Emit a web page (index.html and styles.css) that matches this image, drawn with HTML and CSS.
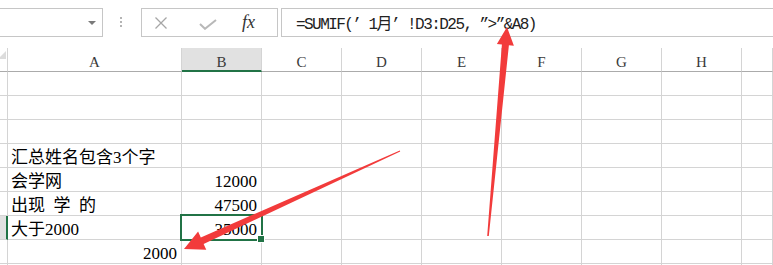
FILE: index.html
```html
<!DOCTYPE html>
<html>
<head>
    <meta charset="UTF-8">
    <title>SUMIF</title>
    <link rel="stylesheet" href="styles.css">
</head>
<body>
    <div class="fbar">
        <div class="namebox"><span class="drop"></span></div>
        <div class="grip"><i></i><i></i><i></i></div>
        <div class="fxbox">
            <svg class="ic-x" width="14" height="12" viewBox="0 0 14 12"><path d="M1.5 0.5 L12.5 11.5 M12.5 0.5 L1.5 11.5" /></svg>
            <svg class="ic-ok" width="18" height="11" viewBox="0 0 18 11"><path d="M1 5 L6 9.8 L17 1" /></svg>
            <span class="fx">fx</span>
        </div>
        <div class="formula">=SUMIF(’ 1月’ !D3:D25, ”>”&amp;A8)</div>
    </div>

    <div class="sheet">
        <div class="c hd corner"><span class="tri"></span></div>
        <div class="c hd">A</div>
        <div class="c hd on">B</div>
        <div class="c hd">C</div>
        <div class="c hd">D</div>
        <div class="c hd">E</div>
        <div class="c hd">F</div>
        <div class="c hd">G</div>
        <div class="c hd">H</div>
        <div class="c hd"></div>

        <div class="c rh"></div><div class="c"></div><div class="c"></div><div class="c"></div><div class="c"></div><div class="c"></div><div class="c"></div><div class="c"></div><div class="c"></div><div class="c"></div>
        <div class="c rh"></div><div class="c"></div><div class="c"></div><div class="c"></div><div class="c"></div><div class="c"></div><div class="c"></div><div class="c"></div><div class="c"></div><div class="c"></div>
        <div class="c rh"></div><div class="c"></div><div class="c"></div><div class="c"></div><div class="c"></div><div class="c"></div><div class="c"></div><div class="c"></div><div class="c"></div><div class="c"></div>

        <div class="c rh"></div><div class="c">汇总姓名包含3个字</div><div class="c"></div><div class="c"></div><div class="c"></div><div class="c"></div><div class="c"></div><div class="c"></div><div class="c"></div><div class="c"></div>
        <div class="c rh"></div><div class="c">会学网</div><div class="c r">12000</div><div class="c"></div><div class="c"></div><div class="c"></div><div class="c"></div><div class="c"></div><div class="c"></div><div class="c"></div>
        <div class="c rh"></div><div class="c">出现&ensp;学&ensp;的</div><div class="c r">47500</div><div class="c"></div><div class="c"></div><div class="c"></div><div class="c"></div><div class="c"></div><div class="c"></div><div class="c"></div>
        <div class="c rh on"></div><div class="c">大于2000</div><div class="c r sel">35000</div><div class="c"></div><div class="c"></div><div class="c"></div><div class="c"></div><div class="c"></div><div class="c"></div><div class="c"></div>
        <div class="c rh"></div><div class="c r">2000</div><div class="c"></div><div class="c"></div><div class="c"></div><div class="c"></div><div class="c"></div><div class="c"></div><div class="c"></div><div class="c"></div>
        <div class="c rh"></div><div class="c"></div><div class="c"></div><div class="c"></div><div class="c"></div><div class="c"></div><div class="c"></div><div class="c"></div><div class="c"></div><div class="c"></div>
    </div>

    <!-- red callout arrows drawn over the sheet -->
    <svg class="arrows" width="773" height="265" viewBox="0 0 773 265">
        <polygon points="487.2,235.9 501.9,44.6 496.9,44.1 507,27 513.9,45.7 508.9,45.2 488.8,236.1" />
        <polygon points="399.8,150.5 200.8,237.5 198.1,231.6 184,249 206.3,249.8 203.6,243.9 400.2,151.5" />
    </svg>
</body>
</html>
```

FILE: styles.css
```css
* {
    box-sizing: border-box;
}

body {
    margin: 0;
    width: 773px;
    height: 265px;
    overflow: hidden;
    position: relative;
    background: #fff;
    font-family: "Liberation Serif", "Noto Sans CJK SC", serif;
}

/* formula bar */
.fbar {
    display: flex;
    align-items: flex-start;
    height: 48px;
    padding-top: 8px;
}

.namebox {
    width: 104px;
    height: 29px;
    margin-left: -1px;
    border: 1px solid #c6c6c6;
    display: flex;
    align-items: center;
    justify-content: flex-end;
    padding-right: 6px;
}

.drop {
    width: 0;
    height: 0;
    border-left: 4px solid transparent;
    border-right: 4px solid transparent;
    border-top: 4px solid #7a7a7a;
}

.grip {
    display: flex;
    flex-direction: column;
    gap: 2px;
    margin: 9px 0 0 17px;
}

.grip i {
    display: block;
    width: 2px;
    height: 2px;
    background: #b4b4b4;
}

.fxbox {
    width: 137px;
    height: 29px;
    margin-left: 19px;
    border: 1px solid #c6c6c6;
    display: flex;
    align-items: center;
}

.ic-x {
    margin-left: 12px;
}

.ic-x path {
    stroke: #a6a6a6;
    stroke-width: 1.3;
    fill: none;
}

.ic-ok {
    margin: 3px 0 0 31px;
}

.ic-ok path {
    stroke: #b8b8b8;
    stroke-width: 2;
    fill: none;
}

.fx {
    margin-left: 25px;
    font-style: italic;
    font-size: 18px;
    color: #333;
}

.formula {
    flex: 1;
    height: 29px;
    margin-left: 3px;
    margin-right: -2px;
    border: 1px solid #c6c6c6;
    padding: 6px 0 0 14px;
    font-family: "Liberation Mono", "Noto Sans CJK SC", monospace;
    font-size: 16px;
    letter-spacing: -1.55px;
    line-height: 20px;
    color: #222;
    white-space: nowrap;
}

/* sheet grid */
.sheet {
    display: grid;
    grid-template-columns: 8px 174px repeat(7, 80px) 1fr;
    grid-auto-rows: 24px;
    height: 217px;
    overflow: hidden;
}

.c {
    display: flex;
    align-items: flex-end;
    border-right: 1px solid #d4d4d4;
    border-bottom: 1px solid #d4d4d4;
    padding: 0 4px 0 3px;
    font-size: 17px;
    line-height: 19px;
    color: #000;
    white-space: nowrap;
}

.r {
    justify-content: flex-end;
}

.hd {
    justify-content: center;
    border-bottom-color: #ababab;
    padding: 0;
    font-size: 15px;
    line-height: 18px;
    color: #3a3a3a;
}

.hd.on {
    background: #e1e1e1;
    border-bottom: 2px solid #217346;
    line-height: 16px;
}

.corner {
    justify-content: flex-end;
    padding: 0 1px 12px 0;
}

.tri {
    width: 0;
    height: 0;
    border-left: 8px solid transparent;
    border-bottom: 8px solid #dcdcdc;
}

.rh {
    padding: 0;
}

.rh.on {
    background: #e1e1e1;
    border-right: 2px solid #217346;
}

.sel {
    position: relative;
}

.sel::after {
    content: "";
    position: absolute;
    top: -2px;
    left: -2px;
    right: -2px;
    bottom: -2px;
    border: 2px solid #217346;
}

.sel::before {
    content: "";
    position: absolute;
    right: -4px;
    bottom: -4px;
    width: 6px;
    height: 6px;
    background: #217346;
    border: 1px solid #fff;
    z-index: 1;
}

.arrows {
    position: absolute;
    top: 0;
    left: 0;
    pointer-events: none;
}

.arrows polygon {
    fill: #f23b3b;
}
```
